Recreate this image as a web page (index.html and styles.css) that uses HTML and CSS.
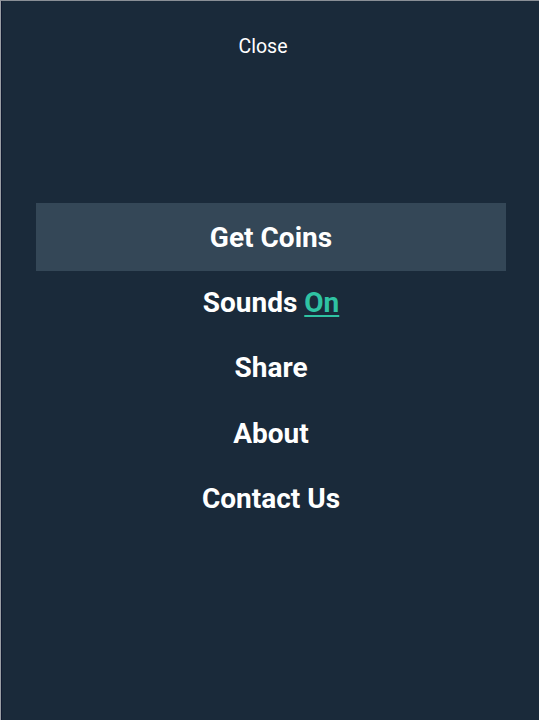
FILE: index.html
```html
<!DOCTYPE html>
<html lang="en">
  <head>
    <meta charset="UTF-8" />
    <meta name="viewport" content="width=device-width, initial-scale=1.0" />
    <title>Menu</title>
    <link rel="stylesheet" href="styles.css">
  </head>
  <body>
    <main class="panel">
      <div class="top">
        <span class="close">Close</span>
      </div>
      <ul class="menu">
        <li class="item active">Get Coins</li>
        <li class="item">Sounds <span class="toggle">On</span></li>
        <li class="item">Share</li>
        <li class="item">About</li>
        <li class="item">Contact Us</li>
      </ul>
    </main>
  </body>
</html>
```

FILE: styles.css
```css
html, body {
    margin: 0;
    height: 100%;
}

body {
    background: #1b2b3b;
    font-family: Roboto, "Noto Sans", sans-serif;
    color: #fff;
}

.panel {
    height: 719px;
    border-top: 1px solid #8a8f96;
    border-left: 1px solid #9a9ea4;
    box-shadow: inset 1px 0 0 #0f1930;
    background: #1a2a3a;
}

.top {
    display: flex;
    justify-content: center;
    padding: 34px 14px 0 0;
    height: 168px;
}

.close {
    font-size: 19.5px;
    line-height: 24px;
}

.menu {
    list-style: none;
    margin: 0;
    padding: 0 33px 0 35px;
}

.item {
    text-align: center;
    font-size: 28px;
    font-weight: 700;
    height: 65.5px;
    line-height: 67px;
}

.item.active {
    background: #344757;
    height: 68px;
    line-height: 70px;
    margin-bottom: -2.5px;
}

.toggle {
    color: #2fc3a3;
    text-decoration: underline;
    text-underline-offset: 3px;
    text-decoration-thickness: 2px;
}
```
